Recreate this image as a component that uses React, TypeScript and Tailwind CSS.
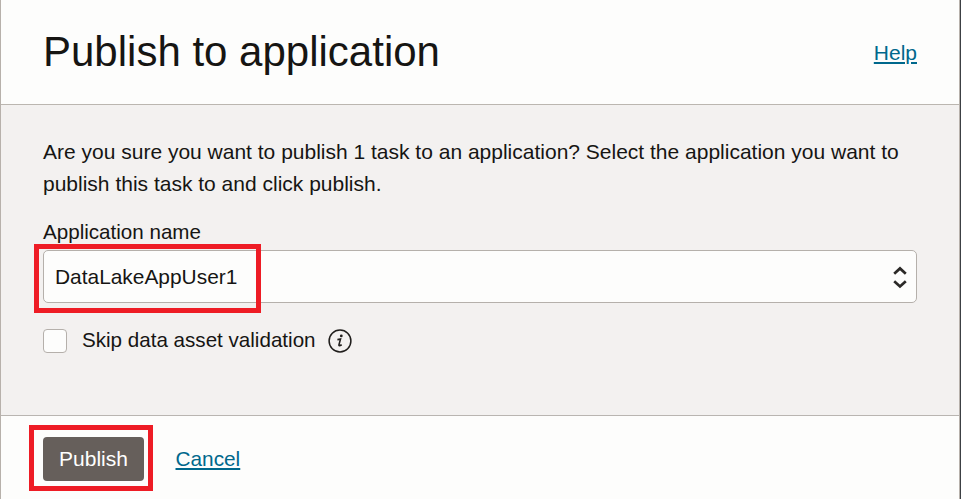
function SelectArrows() {
  return (
    <svg width="16" height="24" viewBox="0 0 16 24" fill="none" stroke="#2b2927" strokeWidth="2.7" aria-hidden="true">
      <path d="M2.2 8.7 L8 3.4 L13.8 8.7" />
      <path d="M2.2 16.2 L8 21.5 L13.8 16.2" />
    </svg>
  );
}

function InfoIcon() {
  return (
    <svg className="shrink-0" width="24" height="24" viewBox="0 0 24 24" aria-hidden="true">
      <circle cx="12" cy="12" r="10.9" fill="none" stroke="#201e1c" strokeWidth="1.5" />
      <circle cx="13.3" cy="6.9" r="1.4" fill="#201e1c" />
      <path d="M9.4 10.6 L12.5 10.1 L11 15.6 Q10.5 17.7 13.7 15.8" fill="none" stroke="#201e1c" strokeWidth="1.6" />
    </svg>
  );
}

export default function App() {
  return (
    <div className="flex h-[499px] w-[961px] overflow-hidden bg-[#3c4044] font-['Liberation_Sans',Arial,sans-serif] text-[#161513]">
      <div className="flex w-[960px] flex-col border-x border-[#b7b1ab] bg-[#fdfdfc]">
        <header className="flex h-[105px] shrink-0 items-center justify-between border-b border-[#bbb6b0] px-[42px]">
          <h1 className="-mt-px text-[42px] leading-[48px] whitespace-nowrap">Publish to application</h1>
          <a className="mt-px text-[21px] leading-6 text-[#00688c] underline decoration-2 underline-offset-2">Help</a>
        </header>
        <main className="h-[311px] shrink-0 border-b border-[#b9b5b1] bg-[#f3f1f0] px-[42px] pt-[31px] text-[21px]">
          <p className="leading-8 whitespace-nowrap">
            Are you sure you want to publish 1 task to an application? Select the application you want to
            <br />
            publish this task to and click publish.
          </p>
          <div className="mt-5 text-[20.6px] leading-6">Application name</div>
          <div className="relative mt-[6px] flex h-[53px] items-center justify-between rounded-[5px] border border-[#b5b0ab] bg-[#fdfdfc] pr-2 pl-[11px]">
            <span className="text-[20.9px] leading-6">DataLakeAppUser1</span>
            <SelectArrows />
            <div className="pointer-events-none absolute -top-[7px] -left-[10px] h-[69px] w-[227px] border-5 border-[#ee1c25]" />
          </div>
          <div className="mt-[26px] flex h-6 items-center">
            <span className="size-6 rounded-[4px] border border-[#b5b0ab] bg-[#fdfdfc]" />
            <span className="-mt-0.5 ml-[15px] w-[246px] text-[20.6px] leading-6 whitespace-nowrap">Skip data asset validation</span>
            <InfoIcon />
          </div>
        </main>
        <footer className="flex h-[83px] shrink-0 items-start px-[42px] pt-[21px]">
          <div className="relative">
            <button className="block h-11 w-[101px] rounded-[4px] bg-[#665f5b] text-[21px] leading-[44px] text-white">Publish</button>
            <div className="pointer-events-none absolute -top-3 -left-[14px] h-[66px] w-[124px] border-5 border-[#ee1c25]" />
          </div>
          <a className="ml-[31.5px] text-[20.8px] leading-[44px] text-[#00688c] underline decoration-2 underline-offset-2">Cancel</a>
        </footer>
      </div>
    </div>
  );
}
